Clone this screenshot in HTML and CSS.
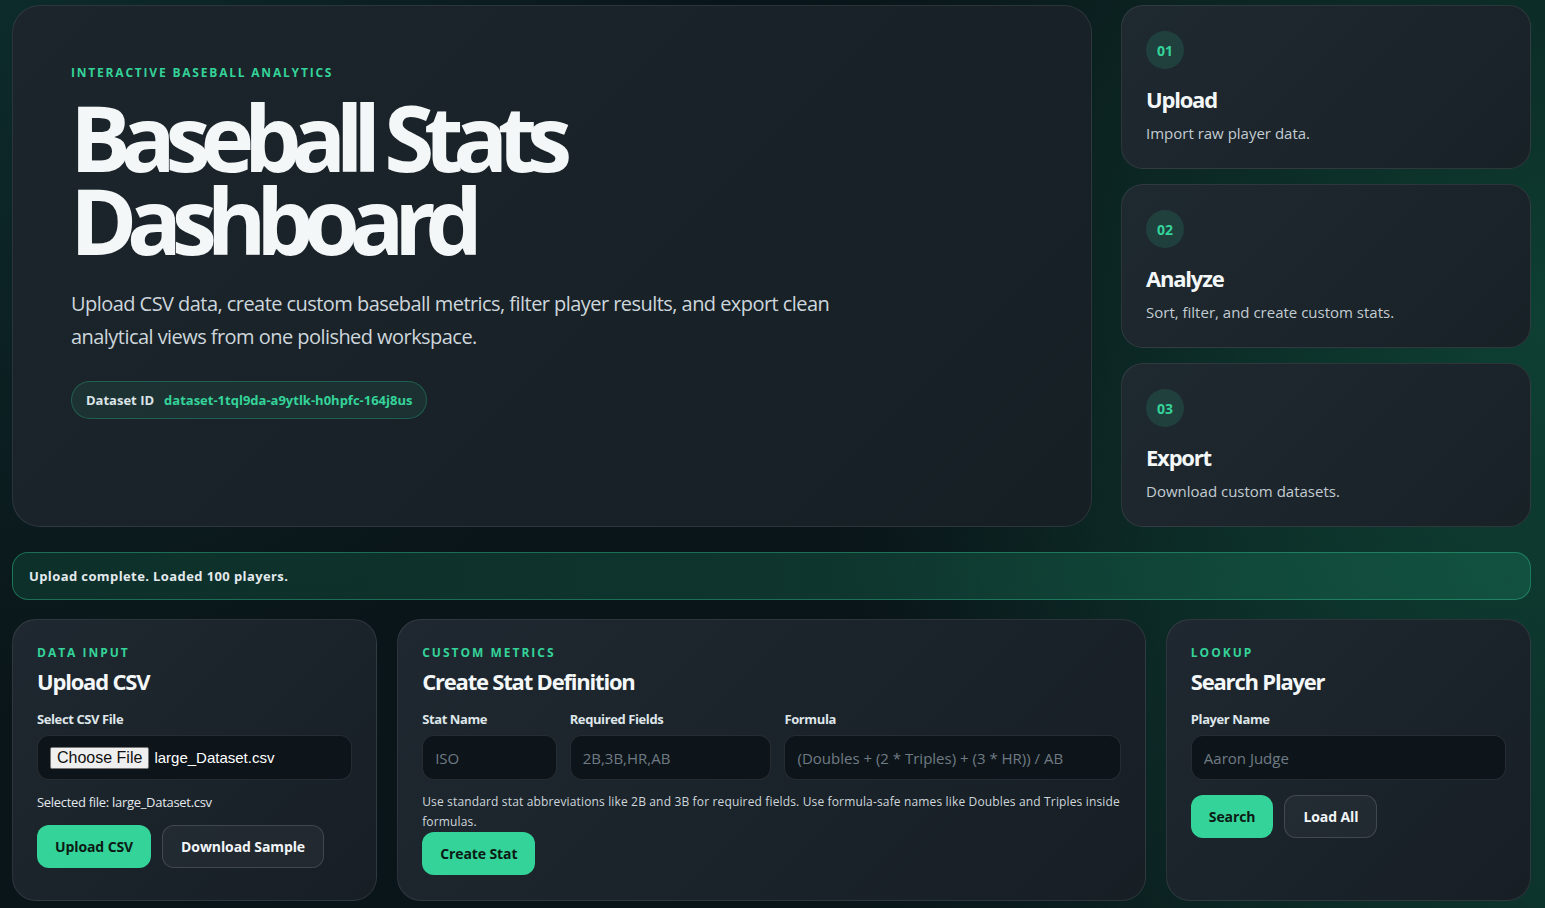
FILE: index.html
```html
<!DOCTYPE html>
<html lang="en">
<head>
    <meta charset="UTF-8">
    <meta name="viewport" content="width=device-width, initial-scale=1.0">
    <title>Baseball Stats Dashboard</title>
    <link rel="stylesheet" href="styles.css">
</head>
<body>

    <div class="page">
        <section class="top">
            <div class="hero">
                <p class="eyebrow">Interactive Baseball Analytics</p>
                <h1>Baseball Stats Dashboard</h1>
                <p class="lead">Upload CSV data, create custom baseball metrics, filter player results, and export clean analytical views from one polished workspace.</p>
                <div class="dataset-pill">
                    <span class="pill-label">Dataset ID</span>
                    <span class="pill-value" id="dataset-id">dataset-1tql9da-a9ytlk-h0hpfc-164j8us</span>
                </div>
            </div>

            <div class="steps">
                <div class="step">
                    <span class="step-num">01</span>
                    <h3>Upload</h3>
                    <p>Import raw player data.</p>
                </div>
                <div class="step">
                    <span class="step-num">02</span>
                    <h3>Analyze</h3>
                    <p>Sort, filter, and create custom stats.</p>
                </div>
                <div class="step">
                    <span class="step-num">03</span>
                    <h3>Export</h3>
                    <p>Download custom datasets.</p>
                </div>
            </div>
        </section>

        <div class="status" id="status">Upload complete. Loaded 100 players.</div>

        <section class="panels">
            <div class="panel">
                <p class="eyebrow small">Data Input</p>
                <h2>Upload CSV</h2>
                <label class="field-label">Select CSV File</label>
                <div class="file-field">
                    <span class="file-btn">Choose File</span>
                    <span class="file-name">large_Dataset.csv</span>
                </div>
                <p class="selected">Selected file: large_Dataset.csv</p>
                <div class="actions">
                    <button class="btn primary">Upload CSV</button>
                    <button class="btn ghost">Download Sample</button>
                </div>
            </div>

            <div class="panel">
                <p class="eyebrow small">Custom Metrics</p>
                <h2>Create Stat Definition</h2>
                <div class="stat-grid">
                    <div>
                        <label class="field-label">Stat Name</label>
                        <input type="text" placeholder="ISO">
                    </div>
                    <div>
                        <label class="field-label">Required Fields</label>
                        <input type="text" placeholder="2B,3B,HR,AB">
                    </div>
                    <div>
                        <label class="field-label">Formula</label>
                        <input type="text" placeholder="(Doubles + (2 * Triples) + (3 * HR)) / AB">
                    </div>
                </div>
                <p class="hint">Use standard stat abbreviations like 2B and 3B for required fields. Use formula-safe names like Doubles and Triples inside formulas.</p>
                <button class="btn primary">Create Stat</button>
            </div>

            <div class="panel">
                <p class="eyebrow small">Lookup</p>
                <h2>Search Player</h2>
                <label class="field-label">Player Name</label>
                <input type="text" placeholder="Aaron Judge">
                <div class="actions tight">
                    <button class="btn primary">Search</button>
                    <button class="btn ghost">Load All</button>
                </div>
            </div>
        </section>
    </div>

</body>
</html>
```

FILE: styles.css
```css
* {
    box-sizing: border-box;
}
body {
    margin: 0;
    min-height: 100vh;
    font-family: "Open Sans", "Noto Sans", sans-serif;
    color: #f4f7f8;
    background:
        radial-gradient(circle at 100% 35%, rgba(18, 110, 78, 0.45), transparent 45%),
        radial-gradient(circle at 0% 0%, rgba(16, 70, 64, 0.45), transparent 40%),
        radial-gradient(circle at 100% 100%, rgba(16, 90, 70, 0.35), transparent 40%),
        #0a1519;
}
.page {
    padding: 5px 14px 0 12px;
}
.top {
    display: grid;
    grid-template-columns: 1fr 410px;
    gap: 29px;
}
.hero {
    height: 522px;
    padding: 59px 58px;
    border-radius: 28px;
    border: 1px solid rgba(255, 255, 255, 0.09);
    background: linear-gradient(135deg, #1c252b, #161f24);
}
.eyebrow {
    margin: 0;
    color: #34d399;
    font-size: 12px;
    line-height: 16px;
    font-weight: 700;
    letter-spacing: 1.8px;
    text-transform: uppercase;
}
h1 {
    margin: 15px 0 0 -1px;
    font-size: 91px;
    line-height: 83px;
    font-weight: 700;
    letter-spacing: -10.3px;
    max-width: 640px;
}
.lead {
    margin: 25px 0 0;
    max-width: 790px;
    font-size: 20px;
    line-height: 33px;
    color: #cdd6dc;
    letter-spacing: -0.55px;
}
.dataset-pill {
    display: inline-flex;
    align-items: center;
    gap: 10px;
    margin-top: 28px;
    height: 38px;
    padding: 0 14px;
    border-radius: 999px;
    background: rgba(52, 211, 153, 0.09);
    border: 1px solid rgba(52, 211, 153, 0.28);
    font-size: 13px;
    font-weight: 700;
    letter-spacing: 0;
}
.pill-label {
    color: #dce4e8;
}
.pill-value {
    color: #34d399;
}
.steps {
    display: flex;
    flex-direction: column;
    gap: 15px;
}
.step {
    height: 164px;
    padding: 25px 24px;
    border-radius: 22px;
    border: 1px solid rgba(255, 255, 255, 0.09);
    background: linear-gradient(135deg, #1f2930, #182126);
}
.step-num {
    display: flex;
    align-items: center;
    justify-content: center;
    width: 38px;
    height: 38px;
    border-radius: 50%;
    background: rgba(52, 211, 153, 0.14);
    color: #34d399;
    font-size: 14px;
    font-weight: 700;
}
.step h3 {
    margin: 15px 0 0;
    font-size: 22px;
    line-height: 30px;
    letter-spacing: -1.2px;
}
.step p {
    margin: 9px 0 0;
    font-size: 15px;
    color: #c3ccd2;
    letter-spacing: 0;
}
.status {
    margin-top: 25px;
    height: 48px;
    display: flex;
    align-items: center;
    padding: 0 16px;
    border-radius: 16px;
    border: 1px solid rgba(52, 211, 153, 0.38);
    background: linear-gradient(90deg, rgba(20, 90, 70, 0.35), rgba(24, 110, 84, 0.45));
    font-size: 13px;
    font-weight: 700;
    color: #e3eaee;
    letter-spacing: 0.4px;
}
.panels {
    margin-top: 19px;
    display: grid;
    grid-template-columns: 1fr 2.05fr 1fr;
    gap: 20px;
}
.panel {
    height: 282px;
    padding: 25px 24px;
    border-radius: 24px;
    border: 1px solid rgba(255, 255, 255, 0.09);
    background: linear-gradient(135deg, #1f2830, #171f25);
}
.eyebrow.small {
    font-size: 12px;
    letter-spacing: 2px;
}
.panel h2 {
    margin: 5px 0 0;
    font-size: 22px;
    line-height: 30px;
    letter-spacing: -1.2px;
}
.field-label {
    display: block;
    margin-top: 14px;
    font-size: 13px;
    font-weight: 700;
    color: #dfe6ea;
    letter-spacing: -0.4px;
}
input,
.file-field {
    display: flex;
    align-items: center;
    width: 100%;
    height: 45px;
    margin-top: 7px;
    padding: 0 12px;
    border-radius: 12px;
    border: 1px solid rgba(255, 255, 255, 0.1);
    background: #0e151a;
    color: #e8eef1;
    font-family: inherit;
    font-size: 15px;
}
input::placeholder {
    color: #6f7b84;
}
.file-btn {
    padding: 0 6px;
    background: #efefef;
    border: 1px solid #767676;
    border-radius: 2px;
    color: #111;
    font-family: "Liberation Sans", Arial, sans-serif;
    font-size: 16px;
    line-height: 20px;
}
.file-name {
    margin-left: 5px;
    font-family: "Liberation Sans", Arial, sans-serif;
    font-size: 15px;
    color: #ffffff;
}
.selected {
    margin: 13px 0 0;
    font-size: 13px;
    color: #e3e9ec;
    letter-spacing: -0.3px;
}
.actions {
    display: flex;
    gap: 11px;
    margin-top: 14px;
}
.actions.tight {
    margin-top: 15px;
}
.btn {
    height: 43px;
    padding: 0 18px;
    border-radius: 12px;
    font-family: inherit;
    font-size: 14px;
    font-weight: 700;
    letter-spacing: -0.1px;
    cursor: pointer;
}
.btn.primary {
    background: #34d399;
    border: none;
    color: #0b1a14;
}
.btn.ghost {
    background: rgba(255, 255, 255, 0.04);
    border: 1px solid rgba(255, 255, 255, 0.14);
    color: #f2f5f7;
}
.stat-grid {
    display: grid;
    grid-template-columns: 1fr 1.5fr 2.5fr;
    gap: 13px;
}
.hint {
    margin: 12px 0 0;
    font-size: 12px;
    line-height: 20px;
    color: #cfd7dc;
    letter-spacing: 0.15px;
}
.hint + .btn {
    margin-top: 0;
}
```
